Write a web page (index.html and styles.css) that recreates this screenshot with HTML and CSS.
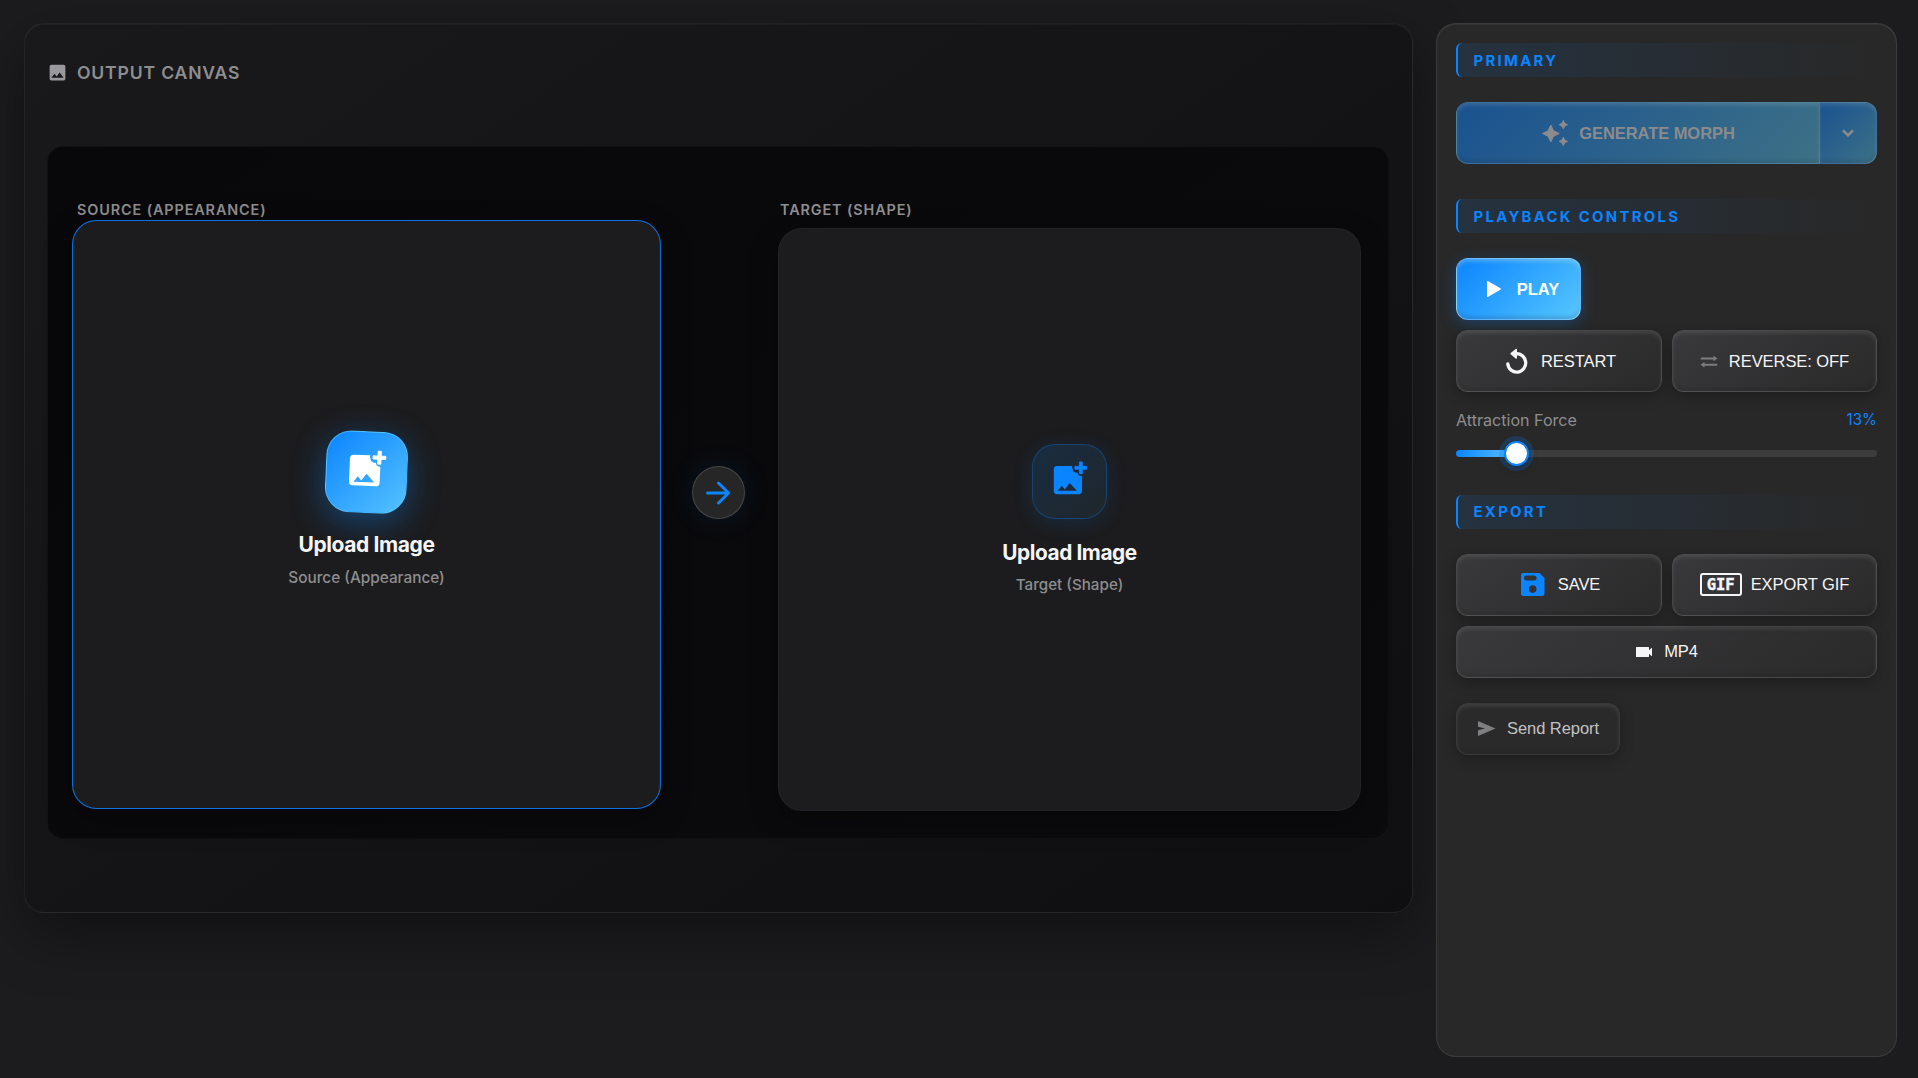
FILE: index.html
```html
<!DOCTYPE html>
<html lang="en">
<head>
    <meta charset="UTF-8">
    <title>Image Morph</title>
    <link rel="stylesheet" href="styles.css">
</head>
<body>
    <div class="app">
        <main class="panel canvas-panel">
            <h2 class="canvas-title">
                <svg class="icon-title" viewBox="0 0 24 24" fill="currentColor"><path d="M21 19V5c0-1.100-.9-2-2-2H5c-1.100 0-2 .9-2 2v14c0 1.100.9 2 2 2h14c1.100 0 2-.9 2-2zM8.500 13.500l2.500 3.010L14.500 12l4.500 6H5l3.500-4.500z"/></svg>
                Output Canvas
            </h2>

            <div class="canvas">
                <section class="drop-column">
                    <h3 class="drop-label">Source (Appearance)</h3>
                    <div class="drop-zone active">
                        <div class="tile">
                            <svg viewBox="0 0 24 24" fill="currentColor"><path fill-rule="evenodd" d="M13.700 4.700H4.800a2 2 0 0 0-2 2v12.500a2 2 0 0 0 2 2h12.500a2 2 0 0 0 2-2v-8.600c-1.300.1-2.300-.6-2.500-2-1.900.1-3-.8-2.900-2.300-.6-.5-.5-1.100-.2-1.600zM5.200 19.200l2.300-3 1.800 2.200 2.800-3.700 4.200 4.500z"/><path d="M17.800 2.300h1.700v2.600H22v1.700h-2.500v2.600h-1.700V6.600h-2.600V4.900h2.600z" stroke="currentColor" stroke-width=".5" stroke-linejoin="round"/></svg>
                        </div>
                        <p class="drop-title">Upload Image</p>
                        <p class="drop-hint">Source (Appearance)</p>
                    </div>
                </section>

                <div class="arrow">
                    <svg viewBox="0 0 24 24" fill="none" stroke="currentColor" stroke-width="3" stroke-linecap="round" stroke-linejoin="round"><path d="M1.500 12h21M12.500 2l10 10-10 10"/></svg>
                </div>

                <section class="drop-column">
                    <h3 class="drop-label">Target (Shape)</h3>
                    <div class="drop-zone">
                        <div class="tile">
                            <svg viewBox="0 0 24 24" fill="currentColor"><path fill-rule="evenodd" d="M13.700 4.700H4.800a2 2 0 0 0-2 2v12.500a2 2 0 0 0 2 2h12.500a2 2 0 0 0 2-2v-8.600c-1.300.1-2.300-.6-2.500-2-1.900.1-3-.8-2.900-2.300-.6-.5-.5-1.100-.2-1.600zM5.200 19.200l2.300-3 1.800 2.200 2.800-3.700 4.200 4.500z"/><path d="M17.800 2.300h1.700v2.600H22v1.700h-2.500v2.600h-1.700V6.600h-2.600V4.900h2.600z" stroke="currentColor" stroke-width=".5" stroke-linejoin="round"/></svg>
                        </div>
                        <p class="drop-title">Upload Image</p>
                        <p class="drop-hint">Target (Shape)</p>
                    </div>
                </section>
            </div>
        </main>

        <aside class="panel controls">
            <h3 class="group-title">Primary</h3>
            <div class="split-button">
                <button class="btn btn-primary btn-generate" disabled>
                    <svg class="icon-sparkle" viewBox="0 0 26 26" fill="currentColor" stroke="currentColor" stroke-width=".9" stroke-linejoin="round"><path d="M8.800 5l2.800 5.700L17.300 13.500l-5.700 2.800L8.800 22l-2.800-5.700L.4 13.500l5.600-2.800zM21.300.5l1.400 2.800 2.800 1.400-2.800 1.400-1.400 2.800L19.900 6.100l-2.800-1.400 2.800-1.400zM21.300 17.200l1.400 2.800 2.800 1.400-2.800 1.400-1.400 2.800-1.400-2.800-2.800-1.400 2.800-1.400z"/></svg>
                    GENERATE MORPH
                </button>
                <button class="btn btn-primary btn-more" disabled>
                    <svg class="icon-chevron" viewBox="0 0 12 8" fill="none" stroke="currentColor" stroke-width="2.600"><path d="M1 1.300l5 5 5-5"/></svg>
                </button>
            </div>

            <h3 class="group-title">Playback Controls</h3>
            <button class="btn btn-primary btn-play">
                <svg class="icon-play" viewBox="0 0 14 16" fill="currentColor"><path d="M0 .8C0 .1.700-.2 1.300.2l12.100 7.100c.6.400.6 1 0 1.400L1.300 15.800C.7 16.200 0 15.900 0 15.200z"/></svg>
                PLAY
            </button>
            <div class="button-row">
                <button class="btn btn-restart">
                    <svg class="icon-restart" viewBox="0 0 22 26" fill="none" stroke="currentColor" stroke-width="3.300" stroke-linecap="round"><path d="M9.500 5.800a9 9.200 0 1 1-7.700 10.200"/><path d="M5.200 5.600l5-4v8.400z" fill="currentColor" stroke-width="1.600" stroke-linejoin="round"/></svg>
                    RESTART
                </button>
                <button class="btn">
                    <svg class="icon-reverse" viewBox="0 0 18 13" fill="none" stroke="currentColor" stroke-width="1.900"><path d="M.8 3.500H14M17.200 9.800H4"/><path d="M13.500.8l4 2.700-4 2.700zM4.500 7.100l-4 2.700 4 2.700z" fill="currentColor" stroke="none"/></svg>
                    REVERSE: OFF
                </button>
            </div>

            <div class="slider-header">
                <span>Attraction Force</span>
                <span class="slider-value">13%</span>
            </div>
            <div class="slider">
                <div class="slider-fill" style="width: 13%"></div>
                <div class="slider-thumb"></div>
                <div class="slider-rest"></div>
            </div>

            <h3 class="group-title">Export</h3>
            <div class="button-row export-row">
                <button class="btn btn-save">
                    <svg class="icon-save" viewBox="0 0 24 23" fill="currentColor"><path fill-rule="evenodd" d="M2.200 0h16.300L23.500 5v15.800a2.200 2.200 0 0 1-2.200 2.200H2.200A2.200 2.200 0 0 1 0 20.800V2.200A2.200 2.200 0 0 1 2.200 0zM5.500 2.500a2.500 2.500 0 0 0 0 5h7.600a2.500 2.500 0 0 0 0-5zM11.700 12.300a3.800 3.800 0 1 0 0 7.600 3.800 3.800 0 0 0 0-7.600z"/></svg>
                    SAVE
                </button>
                <button class="btn btn-gif">
                    <span class="gif-badge">GIF</span>
                    EXPORT GIF
                </button>
            </div>
            <button class="btn btn-mp4">
                <svg class="icon-video" viewBox="0 0 16 10" fill="currentColor"><path d="M.6 0h11.800c.4 0 .6.200.6.600v2.700L15.500 1h.5v8h-.5L13 6.700v2.700c0 .4-.2.600-.6.600H.6C.2 10 0 9.800 0 9.400V.6C0 .2.200 0 .6 0z"/></svg>
                MP4
            </button>
            <button class="btn btn-report">
                <svg class="icon-send" viewBox="0 0 18 15" fill="currentColor"><path d="M0 0l17.500 7.500L0 15V9.300l7-1.800-7-1.800z"/></svg>
                Send Report
            </button>
        </aside>
    </div>
</body>
</html>
```
FILE: styles.css
```css
* {
    box-sizing: border-box;
}

body {
    margin: 0;
    height: 1078px;
    overflow: hidden;
    background: #1c1c1e;
    color: #f5f5f7;
    font-family: Inter, sans-serif;
}

h2, h3, p {
    margin: 0;
}

svg {
    display: block;
    flex: none;
}

.app {
    display: grid;
    grid-template-columns: 1389px 461px;
    gap: 23px;
    align-items: start;
    padding: 23px 21px 21px 24px;
    height: 1078px;
}

.panel {
    border: 1px solid rgba(255, 255, 255, 0.08);
    border-radius: 20px;
}

/* Canvas */
.canvas-panel {
    height: 890px;
    padding: 23px;
    background: linear-gradient(145deg, #19191b, #0f0f11);
    border-color: rgba(255, 255, 255, 0.07);
    box-shadow: 0 20px 60px rgba(0, 0, 0, 0.4), inset 0 1px 0 rgba(255, 255, 255, 0.03);
}

.canvas-title {
    display: flex;
    align-items: center;
    gap: 12px;
    height: 51px;
    margin-bottom: 49px;
    color: #8e8e91;
    font-size: 17.600px;
    font-weight: 600;
    letter-spacing: 0.820px;
    text-transform: uppercase;
}

.icon-title {
    width: 21px;
    height: 21px;
    margin: -1px -3px 0 -1px;
    color: #98989d;
}

.canvas {
    display: grid;
    grid-template-columns: 583px 53px 583px;
    justify-content: space-between;
    align-items: center;
    height: 693px;
    margin: -1px 0 0 -1px;
    padding: 26px 27px;
    background: linear-gradient(145deg, #08080a, #0b0b0d);
    border: 1px solid rgba(255, 255, 255, 0.035);
    border-radius: 16px;
}

.drop-label {
    height: 54px;
    padding: 27px 0 0 2px;
    color: #8e8e90;
    font-size: 14.400px;
    font-weight: 600;
    line-height: 18px;
    letter-spacing: 0.900px;
    text-transform: uppercase;
}

.drop-zone {
    display: flex;
    flex-direction: column;
    align-items: center;
    justify-content: center;
    height: 583px;
    padding-top: 1px;
    background: #1c1c1e;
    border: 1px solid rgba(255, 255, 255, 0.03);
    border-radius: 24px;
    box-shadow: 0 10px 30px rgba(0, 0, 0, 0.3);
}

.drop-zone.active {
    border-color: #0a74e6;
    transform: translateY(-5px) scale(1.01);
}

.tile {
    display: flex;
    align-items: center;
    justify-content: center;
    width: 75px;
    height: 75px;
    margin-bottom: 20px;
    background: linear-gradient(135deg, rgba(10, 132, 255, 0.16), rgba(100, 210, 255, 0.06));
    border: 1px solid rgba(10, 132, 255, 0.3);
    border-radius: 23px;
    box-shadow: 0 4px 20px rgba(10, 132, 255, 0.15);
    color: #0a84ff;
}

.tile svg {
    width: 41px;
    height: 41px;
    margin: -7px 0 0 -1px;
}

.active .tile {
    background: linear-gradient(135deg, #0a84ff, #55c2ff);
    border-color: rgba(100, 210, 255, 0.5);
    box-shadow: 0 8px 30px rgba(10, 132, 255, 0.4);
    color: #fff;
    transform: translateY(-4px) rotate(2.500deg) scale(1.080);
}

.drop-title {
    margin-bottom: 7px;
    font-size: 20.800px;
    font-weight: 700;
    line-height: 28px;
    letter-spacing: -0.400px;
}

.drop-hint {
    color: #8e8e90;
    font-size: 15.200px;
    font-weight: 500;
    line-height: 22px;
}

.active .drop-title,
.active .drop-hint {
    transform: translateY(-3px);
}

.arrow {
    display: flex;
    align-items: center;
    justify-content: center;
    width: 53px;
    height: 53px;
    background: #262627;
    border: 1px solid rgba(255, 255, 255, 0.15);
    border-radius: 50%;
    box-shadow: 0 0 30px rgba(10, 132, 255, 0.1);
    color: #0a84ff;
}

.arrow svg {
    width: 24px;
    height: 24px;
}

/* Controls */
.controls {
    height: 1034px;
    padding: 19px 19px 0;
    background: #282828;
    border-color: rgba(255, 255, 255, 0.09);
    box-shadow: inset 0 1px 0 rgba(255, 255, 255, 0.06);
}

.group-title {
    height: 34px;
    margin-bottom: 25px;
    padding-left: 15.500px;
    border-left: 2px solid #0a84ff;
    border-radius: 6px;
    background: linear-gradient(90deg, rgba(10, 132, 255, 0.11), rgba(10, 132, 255, 0));
    color: #0a84ff;
    font-size: 14.900px;
    font-weight: 700;
    line-height: 36px;
    letter-spacing: 2.300px;
    text-transform: uppercase;
}

.slider + .group-title {
    line-height: 34px;
}

.btn {
    display: flex;
    align-items: center;
    justify-content: center;
    gap: 13px;
    height: 62px;
    padding: 0;
    background: linear-gradient(145deg, #39393b, #2a2a2b);
    border: 1px solid rgba(255, 255, 255, 0.12);
    border-radius: 12px;
    box-shadow: 0 4px 14px rgba(0, 0, 0, 0.28), inset 0 2px 4px rgba(255, 255, 255, 0.12), inset 0 -2px 4px rgba(0, 0, 0, 0.12);
    color: #f5f5f7;
    font-family: "Liberation Sans", Arial, sans-serif;
    font-size: 16.500px;
    letter-spacing: -0.060px;
    white-space: nowrap;
}

.btn-primary {
    background: linear-gradient(135deg, #0a84ff, #56c7ff);
    border-color: rgba(255, 255, 255, 0.3);
    box-shadow: 0 4px 16px rgba(10, 132, 255, 0.3), inset 0 2px 4px rgba(255, 255, 255, 0.3), inset 0 -2px 4px rgba(0, 0, 0, 0.2);
    color: #fff;
    font-weight: 700;
}

.split-button {
    display: flex;
    margin-bottom: 35px;
}

.split-button .btn {
    background: linear-gradient(135deg, #1a5290, #3d7186);
    border-color: rgba(130, 170, 200, 0.3);
    box-shadow: inset 0 2px 4px rgba(255, 255, 255, 0.15), inset 0 -2px 4px rgba(0, 0, 0, 0.15);
    color: #8b8b8d;
}

.split-button .btn-generate {
    flex: 1;
    gap: 11px;
    padding-left: 1px;
    border-right: 0;
    border-radius: 12px 0 0 12px;
}

.btn-more {
    width: 58px;
    border-radius: 0 12px 12px 0;
}

.btn-play {
    width: 125px;
    margin-bottom: 10px;
    gap: 16px;
    padding-left: 9px;
}

.button-row {
    display: grid;
    grid-template-columns: 206px 205px;
    gap: 10px;
    margin-bottom: 10px;
}

.btn-restart {
    padding-left: 4px;
}

.export-row .btn,
.btn-mp4,
.btn-report {
    padding-bottom: 2px;
}

.btn-save {
    padding-left: 3px;
}

.btn-gif {
    gap: 9px;
}

.gif-badge {
    width: 42px;
    height: 23px;
    border: 2px solid #f5f5f7;
    border-radius: 3px;
    font-family: "DejaVu Sans Mono", monospace;
    font-size: 15.500px;
    font-weight: 700;
    line-height: 20px;
    letter-spacing: 0;
    -webkit-text-stroke: 0.400px #f5f5f7;
}

.btn-mp4 {
    width: 100%;
    height: 52px;
    margin-bottom: 25px;
    gap: 12px;
    padding-left: 1px;
}

.btn-report {
    width: 164px;
    height: 52px;
    gap: 11px;
    padding-left: 1px;
    background: #2a2a2b;
    border-color: rgba(255, 255, 255, 0.07);
    color: #c2c2c4;
}

.icon-sparkle {
    width: 26px;
    height: 26px;
}

.icon-chevron {
    width: 12px;
    height: 8px;
}

.icon-play {
    width: 14px;
    height: 16px;
}

.icon-restart {
    width: 22px;
    height: 26px;
}

.icon-reverse {
    width: 18px;
    height: 13px;
    margin-right: -2px;
    color: #7c7c7e;
}

.icon-save {
    width: 24px;
    height: 23px;
    margin-top: 1px;
    color: #0a84ff;
}

.icon-video {
    width: 16px;
    height: 10px;
    margin-top: 2px;
}

.icon-send {
    width: 18px;
    height: 15px;
    margin-top: 1px;
    color: #7f7f82;
}

.slider-header {
    display: flex;
    justify-content: space-between;
    margin-top: 18px;
    color: #8e8e90;
    font-size: 16.100px;
    line-height: 20px;
}

.slider-value {
    color: #0a84ff;
    font-size: 15.200px;
}

.slider {
    display: flex;
    align-items: center;
    height: 25px;
    margin: 11px 0 29px;
}

.slider-fill {
    height: 7px;
    background: linear-gradient(90deg, #0a84ff, #56c0ff);
    border-radius: 4px 0 0 4px;
}

.slider-thumb {
    flex: none;
    width: 25px;
    height: 25px;
    margin: 0 -18px 0 -7px;
    background: #fff;
    border: 2.500px solid #0a84ff;
    border-radius: 50%;
    box-shadow: 0 0 0 5px rgba(10, 132, 255, 0.2), 0 3px 10px rgba(0, 0, 0, 0.3);
    z-index: 1;
}

.slider-rest {
    flex: 1;
    height: 7px;
    background: #3c3c3d;
    border-radius: 0 4px 4px 0;
}
```
